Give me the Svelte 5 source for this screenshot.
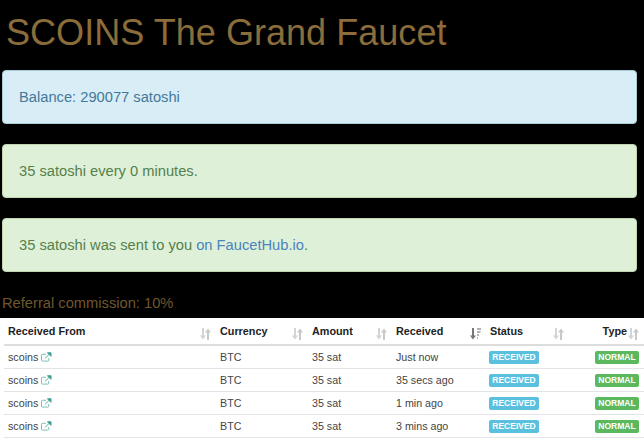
<script>
  const rows = ['Just now', '35 secs ago', '1 min ago', '3 mins ago'];
  const heads = [
    { label: 'Received From', cls: 'c1' },
    { label: 'Currency', cls: 'c2' },
    { label: 'Amount', cls: 'c3' },
    { label: 'Received', cls: 'c4', active: true },
    { label: 'Status', cls: 'c5' },
    { label: 'Type', cls: 'c6' }
  ];
</script>

<main>
  <h1>SCOINS The Grand Faucet</h1>
  <div class="alert info">Balance: 290077 satoshi</div>
  <div class="alert ok">35 satoshi every 0 minutes.</div>
  <div class="alert ok">35 satoshi was sent to you <a href="#top">on FaucetHub.io</a>.</div>
  <p class="ref">Referral commission: 10%</p>
  <section class="panel">
    <table>
      <thead>
        <tr>
          {#each heads as h}
            <th class={h.cls}>
              <span>{h.label}</span>
              <svg class="sort" viewBox="0 0 11 12" aria-hidden="true">
                {#if h.active}
                  <path d="M3 0v8" stroke="#777" stroke-width="2" />
                  <path d="M0 7.500h6l-3 4z" fill="#777" />
                  <path d="M7 1h4M7 4h3.500M7 7h2M7 10h1" stroke="#999" stroke-width="1.500" fill="none" />
                {:else}
                  <path d="M3 0v8" stroke="#d4d4d4" stroke-width="2" />
                  <path d="M0 7.500h6l-3 4z" fill="#d4d4d4" />
                  <path d="M8 12V4" stroke="#c8c8c8" stroke-width="2" />
                  <path d="M5 4.500h6l-3-4z" fill="#c8c8c8" />
                {/if}
              </svg>
            </th>
          {/each}
        </tr>
      </thead>
      <tbody>
        {#each rows as when}
          <tr>
            <td>scoins
              <svg class="ext" viewBox="0 0 12 11" aria-hidden="true">
                <path d="M8.500 6.500v2.500a1 1 0 0 1-1 1h-6a1 1 0 0 1-1-1v-5.500a1 1 0 0 1 1-1h4" fill="none" stroke="#6cbcae" />
                <path d="M4.500 7l5-5M7 .8h4v4z" fill="#3f9f8f" stroke="#3f9f8f" />
              </svg>
            </td>
            <td>BTC</td>
            <td>35 sat</td>
            <td>{when}</td>
            <td><span class="label blue">RECEIVED</span></td>
            <td class="right"><span class="label green">NORMAL</span></td>
          </tr>
        {/each}
      </tbody>
    </table>
  </section>
</main>

<style>
  :global(body) { margin: 0; background: #000; }
  main { font-family: "Liberation Sans", Arial, sans-serif; height: 441px; overflow: hidden; }
  h1 {
    margin: 0;
    padding: 13px 0 0 6px;
    font-size: 36.100px;
    line-height: 40px;
    font-weight: 400;
    color: #8a6d3b;
  }
  .alert {
    margin: 17px 7px 20px 2px;
    height: 52px;
    line-height: 52px;
    padding-left: 16px;
    border: 1px solid;
    border-radius: 4px;
    font-size: 14.700px;
  }
  .alert + .alert { margin-top: 0; }
  .info { background: #d9edf7; border-color: #a5cdd8; color: #44799a; }
  .ok { background: #dff0d8; border-color: #c0d4ae; color: #55804c; }
  .alert a { color: #4a83bd; text-decoration: none; }
  .ref {
    margin: -2px 0 0 2px;
    height: 28px;
    line-height: 26px;
    font-size: 14.700px;
    color: #8a6d3b;
    opacity: 0.8;
  }
  .panel { background: #fff; height: 123px; padding: 0 0 0 4px; }
  table { width: 100%; border-collapse: collapse; table-layout: fixed; font-size: 10.700px; color: #444; }
  th, td { box-sizing: border-box; }
  th {
    position: relative;
    height: 27px;
    padding: 0 0 0 4px;
    text-align: left;
    font-size: 10.800px;
    font-weight: 700;
    color: #222;
    border-bottom: 2px solid #ddd;
  }
  td { height: 23px; padding: 0 0 0 4px; border-bottom: 1px solid #e4e4e4; white-space: nowrap; }
  .c1 { width: 212px; }
  .c2 { width: 92px; }
  .c3 { width: 84px; }
  .c4 { width: 94px; }
  .c5 { width: 83px; }
  th.c6 { text-align: right; padding-right: 17px; }
  .sort { position: absolute; right: 5px; top: 10px; width: 11px; height: 12px; }
  .ext { width: 11px; height: 10px; vertical-align: -1px; }
  .right { text-align: right; padding-right: 5px; }
  .label {
    display: inline-block;
    box-sizing: border-box;
    height: 13px;
    line-height: 13px;
    margin-top: 1px;
    border-radius: 2px;
    font-size: 8.500px;
    font-weight: 700;
    text-align: center;
    color: #fff;
    vertical-align: middle;
  }
  .blue { background: #5bc0de; width: 50px; margin-left: -1px; }
  .green { background: #5cb85c; width: 44px; }
</style>
